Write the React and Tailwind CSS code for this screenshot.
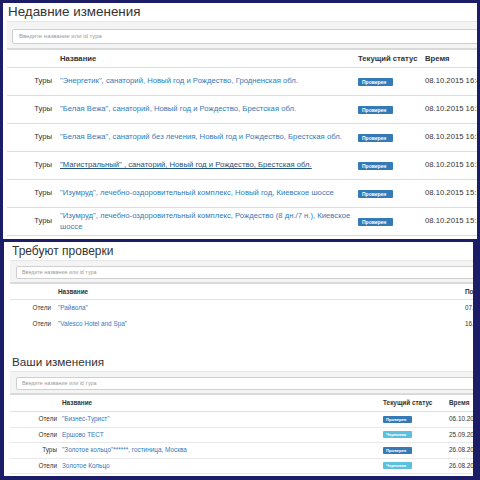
const font = 'font-["Liberation_Sans",Arial,sans-serif]';

const recent = [
  { type: 'Туры', name: '"Энергетик", санаторий, Новый год и Рождество, Гродненская обл.', time: '08.10.2015 16:45' },
  { type: 'Туры', name: '"Белая Вежа", санаторий, Новый год и Рождество, Брестская обл.', time: '08.10.2015 16:38' },
  { type: 'Туры', name: '"Белая Вежа", санаторий без лечения, Новый год и Рождество, Брестская обл.', time: '08.10.2015 16:36' },
  { type: 'Туры', name: '"Магистральный" , санаторий, Новый год и Рождество, Брестская обл.', time: '08.10.2015 16:33', hover: true },
  { type: 'Туры', name: '"Изумруд", лечебно-оздоровительный комплекс, Новый год, Киевское шоссе', time: '08.10.2015 15:18' },
  { type: 'Туры', name: '"Изумруд", лечебно-оздоровительный комплекс, Рождество (8 дн./7 н.), Киевское шоссе', time: '08.10.2015 15:12' },
];

const pending = [
  { type: 'Отели', name: '"Райвола"', time: '07.09.2015 12:10' },
  { type: 'Отели', name: '"Valesco Hotel and Spa"', time: '16.09.2015 10:02' },
];

const mine = [
  { type: 'Отели', name: '"Бизнес-Турист"', status: 'ok', time: '06.10.2015 11:20' },
  { type: 'Отели', name: 'Ершово ТЕСТ', status: 'draft', time: '25.09.2015 14:03' },
  { type: 'Туры', name: '"Золотое кольцо"******, гостиница, Москва', status: 'ok', time: '26.08.2015 17:41' },
  { type: 'Отели', name: 'Золотое Кольцо', status: 'draft', time: '26.08.2015 17:12' },
];

function Search({ big }) {
  return big ? (
    <div className="ml-[4px] h-[29px] bg-[#f4f4f4] border-t border-t-[#e6e6e6] border-b-2 border-b-[#dadada] pl-[5px] pt-[7px] overflow-hidden">
      <div className="w-[480px] h-[15px] bg-white border border-[#cfcfcf] rounded-[2px] pl-[6px] text-[6px] leading-[13px] text-[#9a9a9a]">
        Введите название или id тура
      </div>
    </div>
  ) : (
    <div className="ml-[6px] h-[24px] bg-[#f4f4f4] border-t border-t-[#e6e6e6] border-b-2 border-b-[#dadada] pl-[6px] pt-[5px] overflow-hidden">
      <div className="w-[480px] h-[13px] bg-white border border-[#cfcfcf] rounded-[2px] pl-[5px] text-[5.4px] leading-[11px] text-[#9a9a9a]">
        Введите название или id тура
      </div>
    </div>
  );
}

function Badge({ status, small }) {
  const cls = status === 'draft' ? 'bg-[#5bc0de]' : 'bg-[#337ab7]';
  return small ? (
    <span className={`inline-block ${cls} text-white font-bold text-[4.2px] leading-[7px] px-[3px] w-[29px] rounded-[1px]`}>
      {status === 'draft' ? 'Черновик' : 'Проверен'}
    </span>
  ) : (
    <span className={`inline-block ${cls} text-white font-bold text-[5px] leading-[8px] px-[4px] w-[35px] rounded-[1px]`}>
      Проверен
    </span>
  );
}

export default function App() {
  return (
    <div className={`${font} w-[480px] h-[480px] bg-[#1b1d66] pt-[3px] overflow-hidden text-[#333]`}>
      {/* top screenshot */}
      <div className="ml-[3px] w-[474px] h-[236px] bg-white overflow-hidden">
        <h1 className="pl-[5px] h-[18px] text-[13.4px] leading-[18px] text-[#333]">Недавние изменения</h1>
        <Search big />
        <div className="ml-[4px] text-[7.7px]">
          <div className="flex items-center h-[18px] border-b border-[#dddddd] font-bold">
            <div className="w-[53px] shrink-0" />
            <div className="w-[298px] shrink-0">Название</div>
            <div className="w-[67px] shrink-0 whitespace-nowrap">Текущий статус</div>
            <div className="whitespace-nowrap">Время</div>
          </div>
          {recent.map((r, i) => (
            <div key={i} className="flex items-center h-[28px] border-b border-[#dddddd] leading-[10.5px]">
              <div className="w-[53px] shrink-0 text-right pr-[8px]">{r.type}</div>
              <div className="w-[298px] shrink-0 pr-[6px]">
                <span className={r.hover ? 'text-[#23527c] underline' : 'text-[#337ab7]'}>{r.name}</span>
              </div>
              <div className="w-[67px] shrink-0 flex">
                <Badge status="ok" />
              </div>
              <div className="whitespace-nowrap">{r.time}</div>
            </div>
          ))}
        </div>
      </div>

      {/* bottom screenshot */}
      <div className="mt-[3px] ml-[4px] w-[469px] h-[234px] bg-white overflow-hidden">
        <h2 className="pl-[8px] h-[18px] text-[12px] leading-[18px]">Требуют проверки</h2>
        <Search />
        <div className="ml-[6px] text-[6.4px]">
          <div className="flex items-center h-[16px] border-b border-[#e4e4e4] font-bold">
            <div className="w-[48px] shrink-0" />
            <div className="w-[407px] shrink-0">Название</div>
            <div className="whitespace-nowrap">Последнее изменение</div>
          </div>
          {pending.map((r, i) => (
            <div key={i} className="flex items-center h-[16px]">
              <div className="w-[48px] shrink-0 text-right pr-[7px]">{r.type}</div>
              <div className="w-[407px] shrink-0 text-[#337ab7]">{r.name}</div>
              <div className="whitespace-nowrap">{r.time}</div>
            </div>
          ))}
        </div>

        <h2 className="mt-[21px] pl-[8px] h-[18px] text-[11.7px] leading-[18px]">Ваши изменения</h2>
        <Search />
        <div className="ml-[6px] text-[6.4px]">
          <div className="flex items-center h-[17px] border-b border-[#e0e0e0] font-bold">
            <div className="w-[52px] shrink-0" />
            <div className="w-[321px] shrink-0">Название</div>
            <div className="w-[66px] shrink-0 whitespace-nowrap">Текущий статус</div>
            <div className="whitespace-nowrap">Время</div>
          </div>
          {mine.map((r, i) => (
            <div key={i} className="flex items-center h-[15.5px] border-b border-[#e8e8e8]">
              <div className="w-[52px] shrink-0 text-right pr-[5px]">{r.type}</div>
              <div className="w-[321px] shrink-0 text-[#337ab7] whitespace-nowrap">{r.name}</div>
              <div className="w-[66px] shrink-0 flex">
                <Badge status={r.status} small />
              </div>
              <div className="whitespace-nowrap">{r.time}</div>
            </div>
          ))}
        </div>
      </div>
    </div>
  );
}
